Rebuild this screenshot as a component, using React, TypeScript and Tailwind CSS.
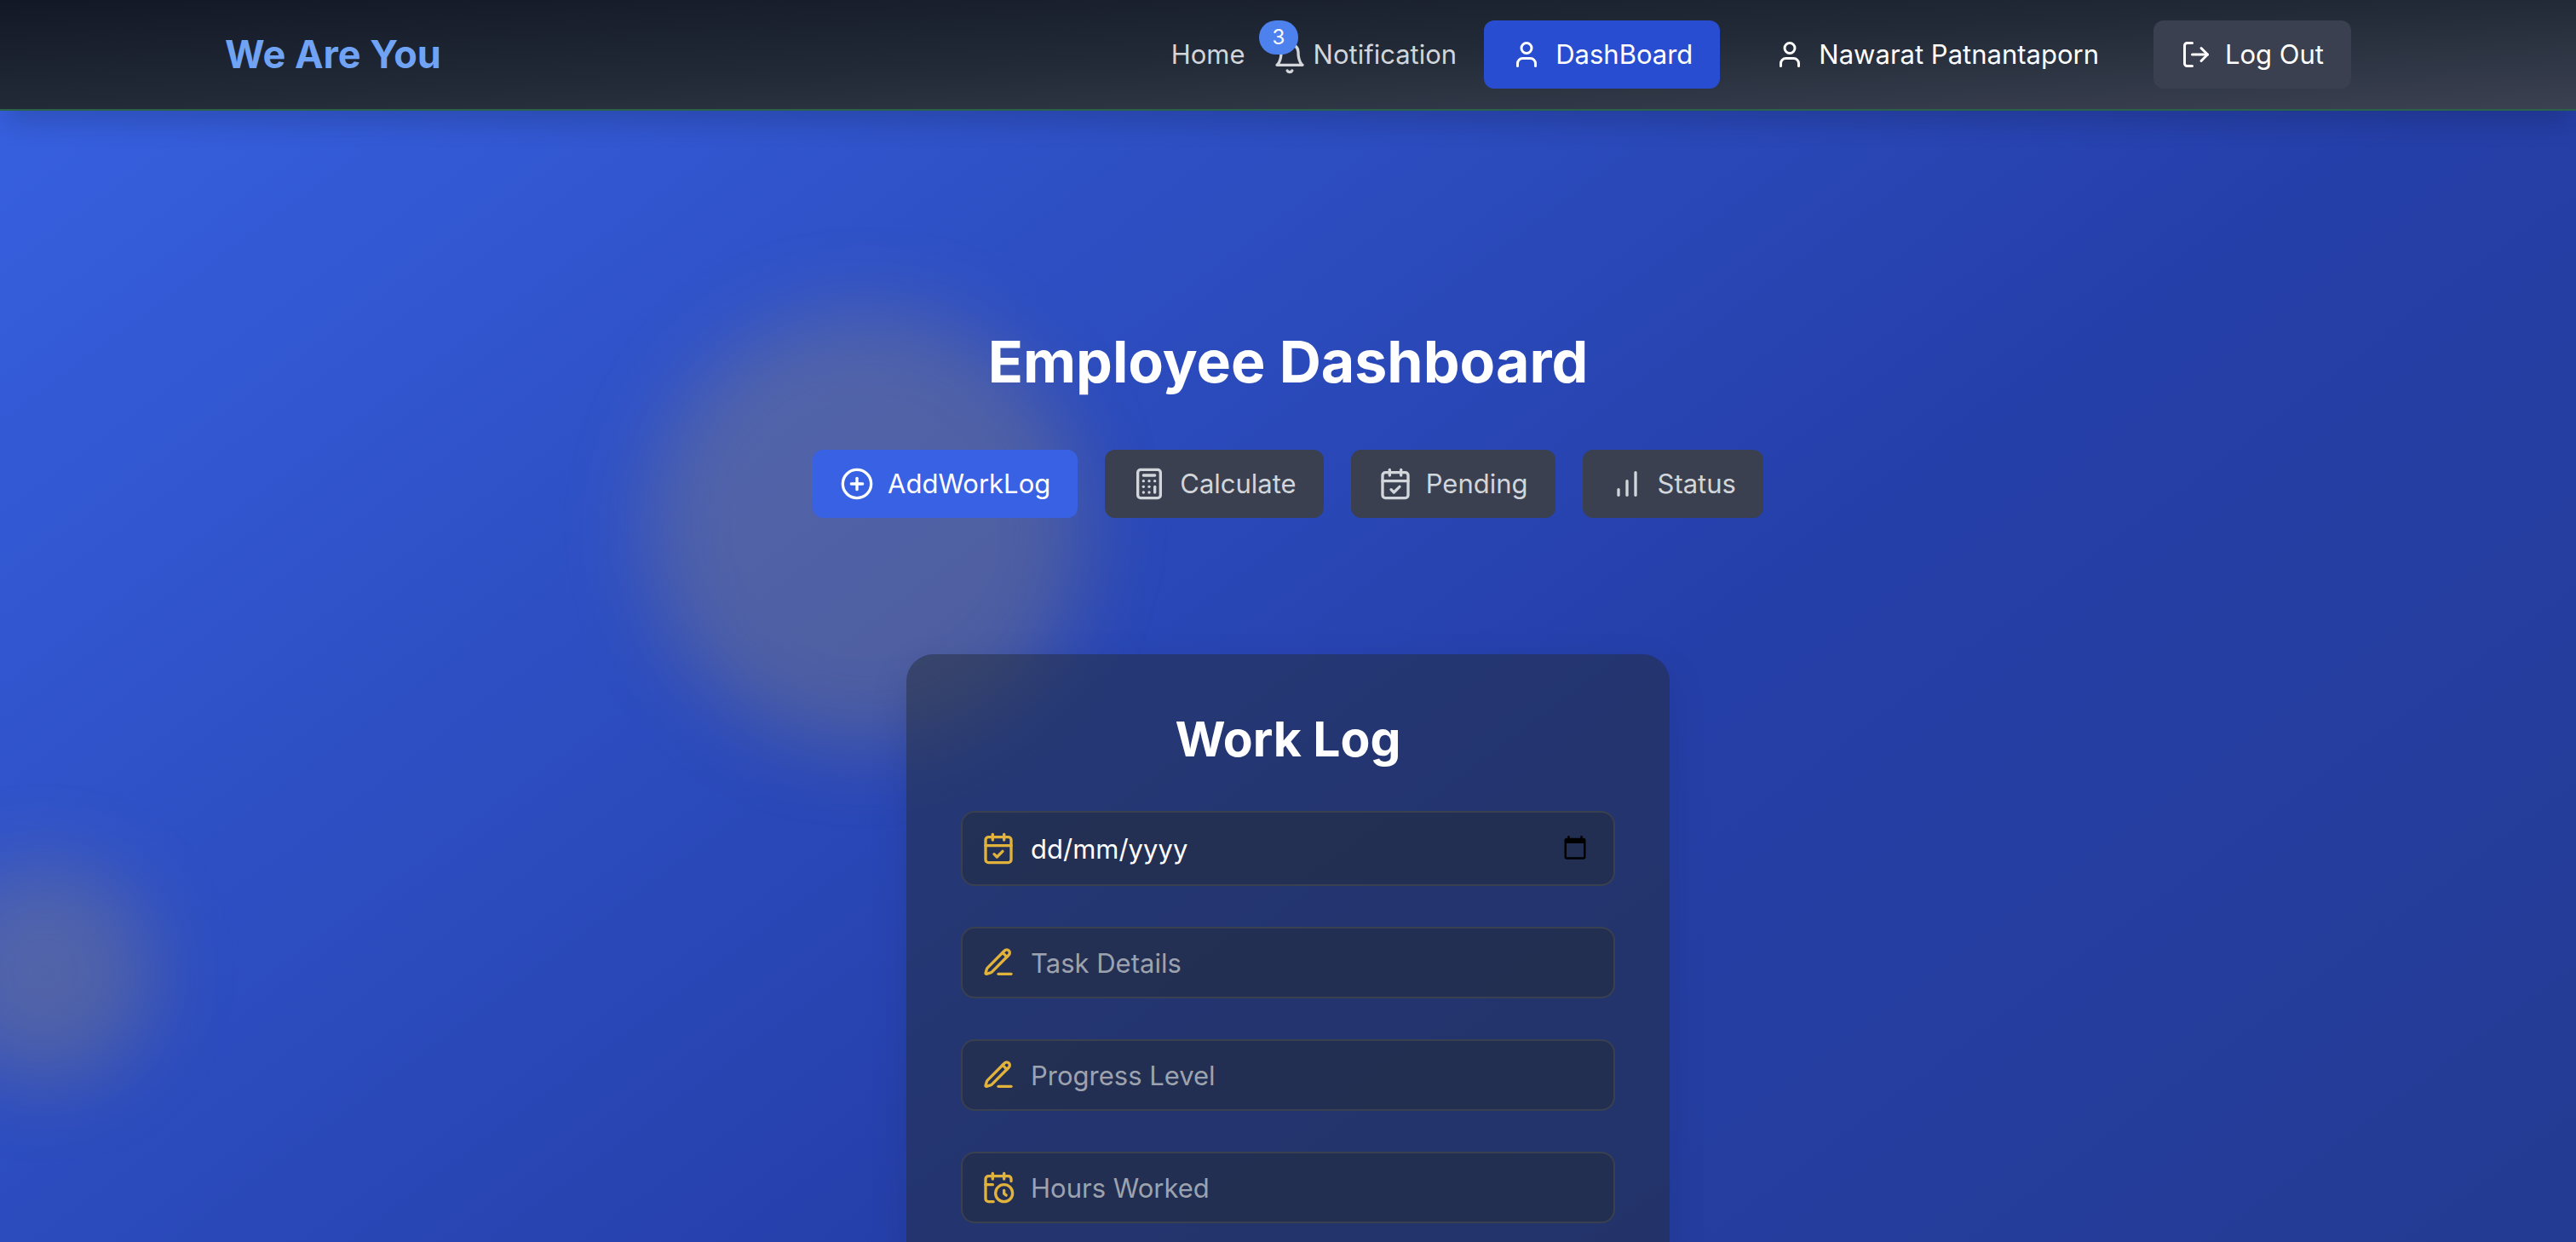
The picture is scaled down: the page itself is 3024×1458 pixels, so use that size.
import type { ComponentType, SVGProps } from "react";
import { Calculator, CalendarCheck, CirclePlus, LogOut, User } from "lucide-react";

type Icon = ComponentType<SVGProps<SVGSVGElement>>;

function StrokeIcon({ children, ...props }: SVGProps<SVGSVGElement>) {
  return (
    <svg
      viewBox="0 0 24 24"
      fill="none"
      stroke="currentColor"
      strokeWidth="2"
      strokeLinecap="round"
      strokeLinejoin="round"
      aria-hidden="true"
      {...props}
    >
      {children}
    </svg>
  );
}

function BarsIcon(props: SVGProps<SVGSVGElement>) {
  return (
    <StrokeIcon {...props}>
      <line x1="12" x2="12" y1="20" y2="10" />
      <line x1="18" x2="18" y1="20" y2="4" />
      <line x1="6" x2="6" y1="20" y2="16" />
    </StrokeIcon>
  );
}

function BellIcon(props: SVGProps<SVGSVGElement>) {
  return (
    <StrokeIcon {...props}>
      <path d="M6 8a6 6 0 0 1 12 0c0 7 3 9 3 9H3s3-2 3-9" />
      <path d="M10.3 21a1.94 1.94 0 0 0 3.4 0" />
    </StrokeIcon>
  );
}

function PencilIcon(props: SVGProps<SVGSVGElement>) {
  return (
    <StrokeIcon {...props}>
      <path d="M12 20h9" />
      <path d="M16.376 3.622a1 1 0 0 1 3.002 3.002L7.368 18.635a2 2 0 0 1-.855.506l-2.872.838a.5.5 0 0 1-.62-.62l.838-2.872a2 2 0 0 1 .506-.854z" />
      <path d="m15 5 3 3" />
    </StrokeIcon>
  );
}

function ClockIcon(props: SVGProps<SVGSVGElement>) {
  return (
    <StrokeIcon {...props}>
      <path d="M21 7.5V6a2 2 0 0 0-2-2H5a2 2 0 0 0-2 2v14a2 2 0 0 0 2 2h3.5" />
      <path d="M16 2v4" />
      <path d="M8 2v4" />
      <path d="M3 10h5" />
      <path d="M17.5 17.5 16 16.3V14" />
      <circle cx="16" cy="16" r="6" />
    </StrokeIcon>
  );
}

function DatePickerIcon(props: SVGProps<SVGSVGElement>) {
  return (
    <svg viewBox="0 0 24 24" fill="currentColor" aria-hidden="true" {...props}>
      <path d="M20 3h-1V1h-2v2H7V1H5v2H4c-1.100 0-2 .9-2 2v16c0 1.100.9 2 2 2h16c1.100 0 2-.9 2-2V5c0-1.100-.9-2-2-2zm0 18H4V8h16v13z" />
    </svg>
  );
}

const tabs: { label: string; icon: Icon; active?: boolean }[] = [
  { label: "AddWorkLog", icon: CirclePlus, active: true },
  { label: "Calculate", icon: Calculator },
  { label: "Pending", icon: CalendarCheck },
  { label: "Status", icon: BarsIcon },
];

const fields: { id: string; label: string; icon: Icon }[] = [
  { id: "task", label: "Task Details", icon: PencilIcon },
  { id: "progress", label: "Progress Level", icon: PencilIcon },
  { id: "hours", label: "Hours Worked", icon: ClockIcon },
];

function Header() {
  return (
    <header className="relative z-20 border-b-2 border-[#2a624a] bg-linear-to-br from-[#131826] via-[#222a37] to-[#3b4151] shadow-[0_20px_30px_-6px_rgba(0,0,0,0.16)]">
      <div className="mx-auto flex max-w-[2560px] items-center justify-between px-8 py-6">
        <a href="#" className="text-[45px] leading-[64px] font-bold text-[#70a3f3]">
          We Are You
        </a>
        <nav className="flex items-center gap-8 text-[31px] leading-[48px] text-[#d2d5da]">
          <a href="#home">Home</a>
          <a href="#notification" className="relative flex items-center gap-2">
            <BellIcon className="mt-2 size-10" />
            <span className="absolute -top-4 -left-4 rounded-full bg-[#4d81ee] px-4 py-1 text-2xl text-white">
              3
            </span>
            Notification
          </a>
          <a
            href="#dashboard"
            className="flex items-center gap-4 rounded-xl bg-[#294dd0] px-8 py-4 text-white"
          >
            <User className="size-9" />
            DashBoard
          </a>
          <a href="#profile" className="flex items-center gap-4 px-8 py-4 text-white">
            <User className="size-9" />
            Nawarat Patnantaporn
          </a>
          <button
            type="button"
            className="flex items-center gap-4 rounded-xl bg-[#3a404f] px-8 py-4 text-white"
          >
            <LogOut className="size-9" />
            Log Out
          </button>
        </nav>
      </div>
    </header>
  );
}

function WorkLogForm() {
  return (
    <form className="w-full max-w-4xl rounded-[32px] bg-[#212936]/50 p-16 shadow-[0_16px_48px_rgba(0,0,0,0.1)]">
      <h2 className="mb-12 text-center text-[57px] leading-[72px] font-bold text-white">
        Work Log
      </h2>
      <div className="flex flex-col gap-12">
        <div className="relative">
          <label htmlFor="date" className="absolute top-6 left-6 text-[#e2b33c]">
            <CalendarCheck className="size-10" />
          </label>
          <input
            id="date"
            type="text"
            aria-label="Date"
            placeholder="dd/mm/yyyy"
            className="block h-[88px] w-full rounded-2xl border-2 border-[#394050] bg-[#212936]/50 pr-24 pl-20 text-[31px] text-white placeholder:text-white"
          />
          <button
            type="button"
            aria-label="Open date picker"
            className="absolute top-7 right-8 text-black"
          >
            <DatePickerIcon className="size-[30px]" />
          </button>
        </div>
        {fields.map(({ id, label, icon: FieldIcon }) => (
          <div key={id} className="relative">
            <label htmlFor={id} className="absolute top-[22px] left-6 text-[#e2b33c]">
              <FieldIcon className="size-10" />
            </label>
            <input
              id={id}
              type="text"
              aria-label={label}
              placeholder={label}
              className="block h-[84px] w-full rounded-2xl border-2 border-[#394050] bg-[#212936]/50 pr-6 pl-20 text-[31px] text-white placeholder:text-[#9da3ae]"
            />
          </div>
        ))}
      </div>
    </form>
  );
}

export default function App() {
  return (
    <div className="relative flex h-screen flex-col overflow-hidden bg-linear-to-br from-[#3862e3] via-[#253fa9] to-[#243986] bg-[length:100%_155%] bg-no-repeat font-['Inter',sans-serif]">
      <div className="absolute top-[364px] left-[760px] size-[512px] rounded-full bg-[#e2b33c]/20 blur-[48px]" />
      <div className="absolute top-[1014px] -left-[76px] size-[256px] rounded-full bg-[#e2b33c]/20 blur-[48px]" />
      <Header />
      <main className="relative z-10 flex flex-col items-center px-8 pt-[254px]">
        <h1 className="mb-16 text-center text-[68px] leading-[80px] font-bold text-white">
          Employee Dashboard
        </h1>
        <div className="mb-40 flex flex-wrap justify-center gap-8 text-[31px] leading-[48px]">
          {tabs.map(({ label, icon: TabIcon, active }) => (
            <button
              key={label}
              type="button"
              className={
                active
                  ? "flex items-center gap-4 rounded-xl bg-[#3862e3] px-8 py-4 text-white"
                  : "flex items-center gap-4 rounded-xl bg-[#3a404f] px-8 py-4 text-[#d2d5da]"
              }
            >
              <TabIcon className="size-10" />
              {label}
            </button>
          ))}
        </div>
        <WorkLogForm />
      </main>
    </div>
  );
}
